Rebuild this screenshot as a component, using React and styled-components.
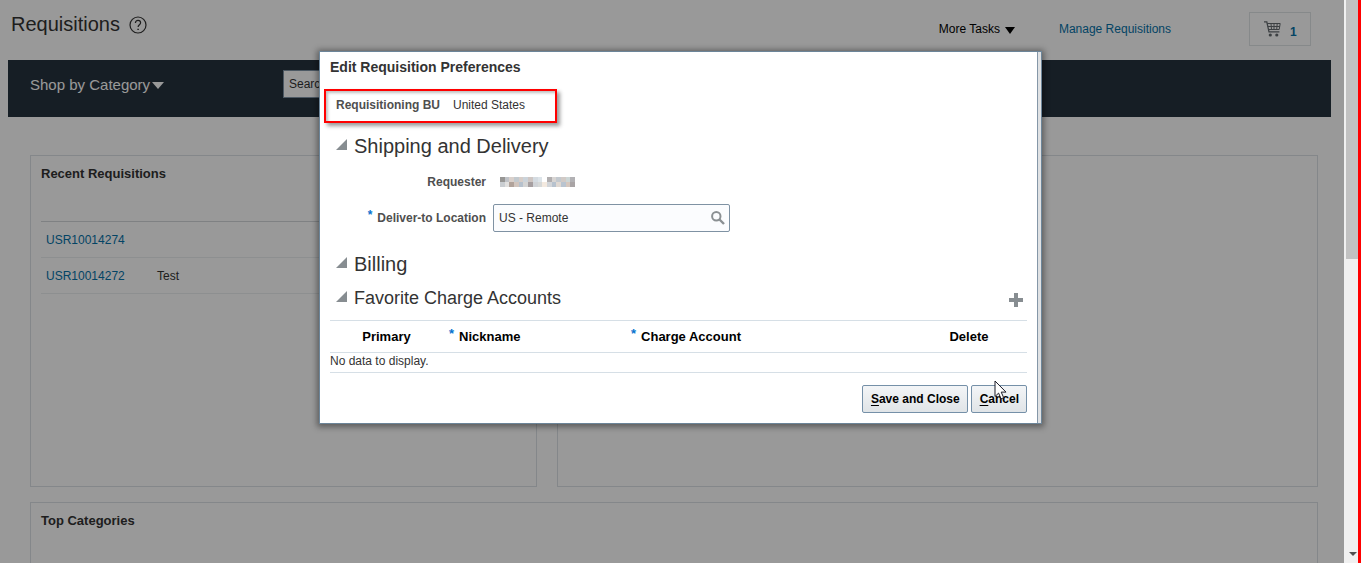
import React, { useState } from 'react';
import styled, { createGlobalStyle } from 'styled-components';

const GlobalStyle = createGlobalStyle`
  * {
    box-sizing: border-box;
  }
  body {
    margin: 0;
    font-family: "Liberation Sans", Arial, sans-serif;
    font-size: 12px;
    line-height: 16px;
    color: #333;
    background: #fff;
  }
  button, input {
    font-family: inherit;
    font-size: 12px;
  }
`;

const Window = styled.div`
  display: flex;
  height: 100vh;
  overflow: hidden;
`;

const Page = styled.div`
  position: relative;
  flex: 1;
  min-width: 0;
  overflow: hidden;
`;

const Backdrop = styled.div`
  position: absolute;
  inset: 0;
  background: rgba(0, 0, 0, 0.4);
`;

const Header = styled.header`
  display: flex;
  align-items: center;
  height: 60px;
  padding: 0 33px 2px 11px;
`;

const PageTitle = styled.h1`
  margin: 0 9px 10px 0;
  font-size: 20px;
  font-weight: normal;
  line-height: 24px;
`;

const IconButton = styled.button`
  display: flex;
  padding: 0;
  border: none;
  background: none;
  cursor: pointer;
`;

const HelpButton = styled(IconButton)`
  margin-bottom: 8px;
`;

const HeaderLinks = styled.nav`
  display: flex;
  align-items: center;
  margin-left: auto;
`;

const TasksButton = styled.button`
  display: flex;
  align-items: center;
  gap: 5px;
  margin-right: 44px;
  padding: 0;
  border: none;
  background: none;
  color: #000;

  svg {
    margin-top: 2px;
  }
`;

const Link = styled.a`
  color: #0572a8;
  text-decoration: none;
`;

const CartLink = styled.a`
  display: flex;
  align-items: center;
  gap: 9px;
  height: 34px;
  width: 62px;
  margin-left: 78px;
  padding-left: 14px;
  border: 1px solid #dfe4e7;
  color: #0572a8;
  font-weight: bold;
  text-decoration: none;

  span {
    padding-top: 6px;
  }
`;

const ShopBar = styled.div`
  display: flex;
  height: 57px;
  margin: 0 13px 0 8px;
  padding: 10px 22px;
  background: #26323e;
`;

const CategoryCell = styled.div`
  width: 253px;
`;

const CategoryButton = styled.button`
  display: flex;
  align-items: center;
  gap: 2px;
  height: 28px;
  padding: 0;
  border: none;
  background: none;
  color: #fff;
  && {
    font-size: 15px;
  }

  svg {
    margin-top: 2px;
  }
`;

const SearchInput = styled.input`
  width: 340px;
  height: 28px;
  padding: 0 5px;
  border: 1px solid #7f93a5;
  background: #fff;
  color: #333;
`;

const Cards = styled.main`
  display: grid;
  grid-template-columns: 2fr 3fr;
  gap: 15px 20px;
  margin: 38px 26px 0 30px;
`;

const Card = styled.section`
  min-height: 332px;
  grid-column: ${({ $wide }) => ($wide ? '1 / -1' : 'auto')};
  padding: 10px;
  border: 1px solid #dce2e6;
`;

const CardTitle = styled.h2`
  margin: 0;
  font-size: 13px;
  line-height: 16px;
`;

const RecentTable = styled.table`
  width: 100%;
  margin-top: 39px;
  border-collapse: collapse;
  border-top: 1px solid #d4d8da;

  td {
    height: 36px;
    padding: 0 5px;
    border-bottom: 1px solid #ebeff1;
  }
  td:first-child {
    width: 111px;
  }
`;

const ScrollTrack = styled.div`
  display: flex;
  flex-direction: column;
  justify-content: space-between;
  width: 14px;
  padding-left: 2px;
  background: #f0f0f0;

  svg {
    margin: 0 0 7px 3px;
  }
`;

const ScrollThumb = styled.div`
  height: 46%;
  background: #c1c1c1;
`;

const EdgeLine = styled.div`
  width: 3px;
  background: #f00;
`;

const DialogLayer = styled.div`
  position: fixed;
  inset: 0;
  display: flex;
  align-items: flex-start;
  justify-content: center;
  padding-top: 51px;
`;

const Dialog = styled.div`
  display: flex;
  width: 723px;
  border: 1px solid #6c8599;
  background: #dfe1e3;
  box-shadow: 0 1px 6px 2px rgba(0, 0, 0, 0.4);
`;

const DialogBody = styled.div`
  flex: 1;
  margin-right: 3px;
  padding: 7px 10px 10px;
  border-right: 1px solid #8597a8;
  background: #fff;
`;

const DialogTitle = styled.h2`
  margin: 0;
  font-size: 14px;
  line-height: 16px;
`;

const UnitBox = styled.div`
  display: flex;
  gap: 13px;
  width: 233px;
  height: 34px;
  margin: 14px 0 0 -6px;
  padding: 6px 10px;
  border: 2px solid #f00;
  box-shadow: 3px 3px 4px rgba(0, 0, 0, 0.4), inset 2px 2px 3px rgba(0, 0, 0, 0.25);
`;

const Label = styled.label`
  font-weight: bold;
  color: #4f4f4f;
`;

const SectionHead = styled.div`
  display: flex;
  align-items: center;
  justify-content: space-between;
  margin-top: ${({ $space }) => $space}px;
  padding: 0 4px 0 6px;

  > button {
    margin-top: 4px;
  }
`;

const SectionTitle = styled.h3`
  margin: 0;
  font-weight: normal;
  line-height: 24px;

  button {
    display: flex;
    align-items: center;
    gap: 7px;
    padding: 0;
    border: none;
    background: none;
    color: #333;
    font-size: ${({ $small }) => ($small ? 18 : 20)}px;
    line-height: 24px;
  }

  svg {
    margin-bottom: 3px;
  }
`;

const FieldRow = styled.div`
  display: flex;
  align-items: center;
  gap: 7px;
  height: 28px;
  margin: ${({ $space }) => $space}px 0 0 6px;
`;

const FieldLabel = styled(Label)`
  width: 150px;
  text-align: right;
`;

const Required = styled.span`
  position: relative;
  top: -3px;
  margin-right: 5px;
  color: #0572ce;
`;

const Masked = styled.span`
  display: flex;
  padding-left: 7px;
`;

const LookupBox = styled.div`
  display: flex;
  align-items: center;
  width: 237px;
  height: 28px;
  padding-right: 4px;
  border: 1px solid #7f92a3;
  border-radius: 2px;
  background: #fbfcfe;

  input {
    flex: 1;
    min-width: 0;
    padding: 0 5px;
    border: none;
    background: none;
    color: #333;
  }
`;

const AccountsTable = styled.table`
  width: 100%;
  margin-top: 10px;
  table-layout: fixed;
  border-collapse: collapse;
  border-top: 1px solid #d6dfe6;

  th {
    height: 32px;
    padding: 0 6px;
    border-bottom: 1px solid #d6dfe6;
    color: #000;
    font-size: 13px;
    text-align: left;
  }
  th:first-child,
  th:last-child {
    text-align: center;
  }
  td {
    height: 20px;
    padding: 0 0 4px;
    border-bottom: 1px solid #d6dfe6;
    line-height: 14px;
  }
`;

const Col = styled.col`
  width: ${({ $width }) => $width}px;
`;

const Footer = styled.div`
  display: flex;
  justify-content: flex-end;
  gap: 3px;
  margin-top: 12px;
`;

const Button = styled.button`
  position: relative;
  height: 28px;
  padding: 0 7px 0 8px;
  border: 1px solid #7590a8;
  border-radius: 2px;
  background: linear-gradient(#f3f5f7, #e0e4e7);
  color: #000;
  font-weight: bold;
  white-space: nowrap;

  u {
    text-underline-offset: 2px;
  }
`;

const Pointer = styled.svg`
  position: absolute;
  left: 22px;
  top: -6px;
`;

const CaretDown = ({ width, height, color }) => (
  <svg width={width} height={height} viewBox="0 0 12 7" preserveAspectRatio="none">
    <path d="M0 0h12L6 7z" fill={color} />
  </svg>
);

const HelpIcon = () => (
  <svg width="18" height="18" viewBox="0 0 18 18" fill="none" stroke="#333" strokeWidth="1.2">
    <circle cx="9" cy="9" r="8" />
    <path d="M6.4 7.1C6.4 5.4 7.5 4.4 9 4.4s2.6 1 2.6 2.4c0 1.9-2.5 2.1-2.5 4.3" />
    <path d="M9.1 12.7v1.4" strokeWidth="1.5" />
  </svg>
);

const CartIcon = () => (
  <svg width="17" height="16" viewBox="0 0 17 16" fill="none" stroke="#666c70" strokeWidth="1">
    <path d="M0 .8h2.8L5 10.8h10.4" strokeWidth="1.3" />
    <path d="M3.2 2.5h13l-1 6H4.6M3.8 5.5h11.9M7 2.5l.5 6M10 2.5v6M13.2 2.5l-.5 6" />
    <circle cx="6.3" cy="14" r="1.6" fill="#666c70" stroke="none" />
    <circle cx="12.8" cy="14" r="1.6" fill="#666c70" stroke="none" />
  </svg>
);

const SearchIcon = () => (
  <svg width="14" height="14" viewBox="0 0 14 14" fill="none" stroke="#8b9093">
    <circle cx="5.3" cy="5.3" r="4.2" strokeWidth="2" />
    <path d="M8.5 8.5l4.5 4.5" strokeWidth="2.4" />
  </svg>
);

const PlusIcon = () => (
  <svg width="14" height="14" viewBox="0 0 14 14">
    <path d="M5 0h4v5h5v4H9v5H5V9H0V5h5z" fill="#878d91" />
  </svg>
);

const DiscloseIcon = () => (
  <svg width="11" height="11" viewBox="0 0 11 11">
    <path d="M11 0v11H0z" fill="#878d91" />
  </svg>
);

const maskRows = [
  ['#979694', '#bfc2c7', '#d9d0cb', '#c2c9ce', '#d6cdc8', '#cbd3da', '#cec6c3', '#d4dbe1', '#dde4e9', '#fff', '#b1aeaf', '#d8d5d3', '#c3c9cf', '#d1cac6', '#ccd6d6', '#b2b1b4'],
  ['#c9cdd1', '#e1e0df', '#b1a39b', '#d1c5be', '#b6c1cd', '#d4d4d4', '#a69fa1', '#d0d3d7', '#d7d9d8', '#f3e9df', '#d2d5d9', '#b7c2ce', '#dfd8d2', '#b9c4d0', '#d5c7be', '#a9a4a5'],
];

const MaskedName = () => (
  <svg width="75" height="10" viewBox="0 0 80 10" preserveAspectRatio="none" shapeRendering="crispEdges">
    {maskRows.map((row, y) =>
      row.map((fill, x) => <rect key={`${x}-${y}`} x={x * 5} y={y * 5} width="5" height="5" fill={fill} />)
    )}
  </svg>
);

const Section = ({ title, space, small, action, children }) => {
  const [open, setOpen] = useState(true);

  return (
    <>
      <SectionHead $space={space}>
        <SectionTitle $small={small}>
          <button type="button" aria-expanded={open} onClick={() => setOpen(!open)}>
            <DiscloseIcon />
            {title}
          </button>
        </SectionTitle>
        {action}
      </SectionHead>
      {open && children}
    </>
  );
};

const PreferencesDialog = () => {
  const [location, setLocation] = useState('US - Remote');

  return (
    <DialogLayer>
      <Dialog role="dialog" aria-labelledby="dialog-title">
        <DialogBody>
          <DialogTitle id="dialog-title">Edit Requisition Preferences</DialogTitle>
          <UnitBox>
            <Label as="span">Requisitioning BU</Label>
            <span>United States</span>
          </UnitBox>

          <Section title="Shipping and Delivery" space={11}>
            <FieldRow $space={10}>
              <FieldLabel as="span">Requester</FieldLabel>
              <Masked><MaskedName /></Masked>
            </FieldRow>
            <FieldRow $space={8}>
              <FieldLabel htmlFor="location">
                <Required>*</Required>
                Deliver-to Location
              </FieldLabel>
              <LookupBox>
                <input id="location" value={location} onChange={e => setLocation(e.target.value)} />
                <IconButton type="button" aria-label="Search location"><SearchIcon /></IconButton>
              </LookupBox>
            </FieldRow>
          </Section>

          <Section title="Billing" space={20} />

          <Section
            title="Favorite Charge Accounts"
            space={10}
            small
            action={<IconButton type="button" aria-label="Add account"><PlusIcon /></IconButton>}
          >
            <AccountsTable>
              <colgroup>
                <Col $width={113} />
                <Col $width={182} />
                <col />
                <Col $width={116} />
              </colgroup>
              <thead>
                <tr>
                  <th>Primary</th>
                  <th><Required>*</Required>Nickname</th>
                  <th><Required>*</Required>Charge Account</th>
                  <th>Delete</th>
                </tr>
              </thead>
              <tbody>
                <tr>
                  <td colSpan={4}>No data to display.</td>
                </tr>
              </tbody>
            </AccountsTable>
          </Section>

          <Footer>
            <Button type="button"><u>S</u>ave and Close</Button>
            <Button type="button">
              <u>C</u>ancel
              <Pointer width="13" height="20" viewBox="0 0 13 20">
                <path d="M1 1v15.5l3.6-3.4 2.5 5.7 2.6-1.1-2.5-5.6H12z" fill="#fff" stroke="#1c1c28" strokeWidth="1" />
              </Pointer>
            </Button>
          </Footer>
        </DialogBody>
      </Dialog>
    </DialogLayer>
  );
};

const App = () => (
  <>
    <GlobalStyle />
    <Window>
      <Page>
        <Header>
          <PageTitle>Requisitions</PageTitle>
          <HelpButton type="button" aria-label="Help"><HelpIcon /></HelpButton>
          <HeaderLinks>
            <TasksButton type="button">
              More Tasks
              <CaretDown width={10} height={7} color="#000" />
            </TasksButton>
            <Link href="#manage">Manage Requisitions</Link>
            <CartLink href="#cart">
              <CartIcon />
              <span>1</span>
            </CartLink>
          </HeaderLinks>
        </Header>

        <ShopBar>
          <CategoryCell>
            <CategoryButton type="button">
              Shop by Category
              <CaretDown width={12} height={7} color="#fff" />
            </CategoryButton>
          </CategoryCell>
          <SearchInput aria-label="Search" defaultValue="Search" />
        </ShopBar>

        <Cards>
          <Card>
            <CardTitle>Recent Requisitions</CardTitle>
            <RecentTable>
              <tbody>
                <tr>
                  <td><Link href="#USR10014274">USR10014274</Link></td>
                  <td />
                </tr>
                <tr>
                  <td><Link href="#USR10014272">USR10014272</Link></td>
                  <td>Test</td>
                </tr>
              </tbody>
            </RecentTable>
          </Card>
          <Card />
          <Card $wide>
            <CardTitle>Top Categories</CardTitle>
          </Card>
        </Cards>
        <Backdrop />
      </Page>
      <ScrollTrack>
        <ScrollThumb />
        <CaretDown width={8} height={4} color="#505050" />
      </ScrollTrack>
      <EdgeLine />
    </Window>
    <PreferencesDialog />
  </>
);

export default App;
